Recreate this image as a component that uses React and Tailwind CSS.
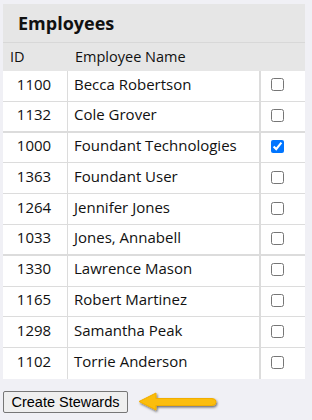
import React, { useState } from "react";

const employees = [
  { id: 1100, name: "Becca Robertson" },
  { id: 1132, name: "Cole Grover", thick: true },
  { id: 1000, name: "Foundant Technologies", checked: true },
  { id: 1363, name: "Foundant User" },
  { id: 1264, name: "Jennifer Jones" },
  { id: 1033, name: "Jones, Annabell", thick: true },
  { id: 1330, name: "Lawrence Mason" },
  { id: 1165, name: "Robert Martinez" },
  { id: 1298, name: "Samantha Peak" },
  { id: 1102, name: "Torrie Anderson", last: true },
];

const App = () => {
  const [checked, setChecked] = useState(
    employees.reduce((acc, e) => ({ ...acc, [e.id]: !!e.checked }), {})
  );

  const toggle = (id) => setChecked((prev) => ({ ...prev, [id]: !prev[id] }));

  return (
    <div className="min-h-[420px] w-[312px] bg-[#f0f0f5] pt-[4px] font-['Open_Sans','Noto_Sans',sans-serif] text-[#111]">
      <div className="ml-[3px] w-[302px] bg-white">
        {/* Title */}
        <div className="h-[39px] bg-[#e6e6e6] border-b border-[#d8d8d8] flex items-center pl-[15px]">
          <h2 className="text-[18px] font-bold text-[#111] leading-none">Employees</h2>
        </div>

        {/* Column headers */}
        <div className="h-[28px] bg-[#e6e6e6] flex items-center text-[14.5px]">
          <div className="w-[65px] pl-[7px]">ID</div>
          <div className="pl-[7px]">Employee Name</div>
        </div>

        {/* Rows */}
        {employees.map((e) => (
          <div
            key={e.id}
            className={
              "flex h-[30.8px] text-[15px] " +
              (e.last ? "" : e.thick ? "border-b-2 border-[#dcdcdc]" : "border-b border-[#dcdcdc]")
            }
          >
            <div className="w-[65px] flex items-center justify-center pr-[2px] pb-[4px] border-r border-[#dcdcdc]">
              {e.id}
            </div>
            <div className="w-[193px] flex items-center pl-[6px] pb-[4px] border-r-2 border-[#dcdcdc]">
              {e.name}
            </div>
            <div className="flex-1 flex items-center pl-[10px] pb-[2px]">
              <input
                type="checkbox"
                checked={checked[e.id]}
                onChange={() => toggle(e.id)}
                className="w-[13px] h-[13px] accent-[#0075ff]"
              />
            </div>
          </div>
        ))}
      </div>

      {/* Button + arrow */}
      <div className="flex items-center mt-[11px] ml-[3px]">
        <button className="h-[22px] w-[125px] bg-[#efefef] border border-[#767676] rounded-[2px] text-[14.5px] leading-none text-black font-['Liberation_Sans',Arial,sans-serif]">
          Create Stewards
        </button>
        <svg width="90" height="24" viewBox="0 0 90 24" className="ml-[8px]">
          <defs>
            <filter id="sh" x="-10%" y="-30%" width="130%" height="180%">
              <feDropShadow dx="1" dy="1.5" stdDeviation="1" floodColor="#000" floodOpacity="0.55" />
            </filter>
          </defs>
          <path
            d="M3 11.5 L20 3 L20 8.5 L76 8.5 Q80 8.5 80 12 Q80 15.5 76 15.5 L20 15.5 L20 20 Z"
            fill="#fbbd08"
            stroke="#f2ae00"
            strokeWidth="1"
            strokeLinejoin="round"
            filter="url(#sh)"
          />
        </svg>
      </div>
    </div>
  );
};

export default App;
